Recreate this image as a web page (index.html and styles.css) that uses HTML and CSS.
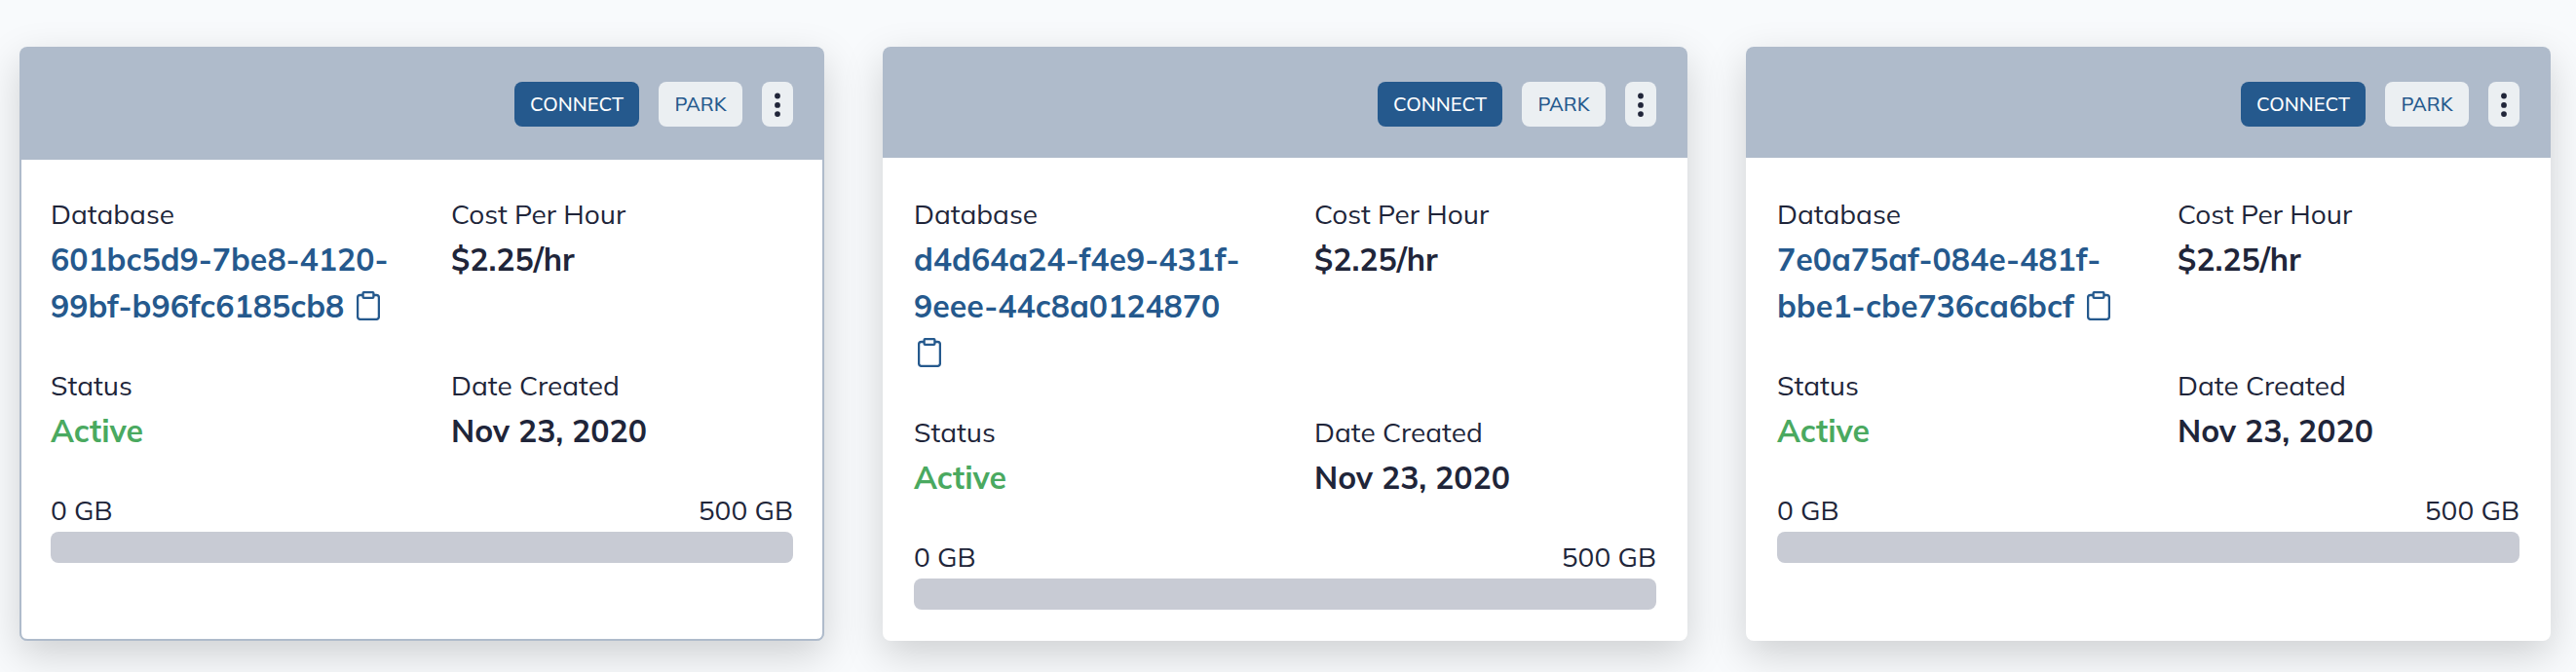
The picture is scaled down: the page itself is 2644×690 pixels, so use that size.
FILE: index.html
```html
<!DOCTYPE html>
<html lang="en">
<head>
<meta charset="utf-8">
<title>Databases</title>
<link rel="stylesheet" href="styles.css">
</head>
<body>
<svg width="0" height="0" class="sprite">
  <symbol id="clipboard" viewBox="0 0 24 30">
    <rect x="1.1" y="4" width="21.8" height="24.9" rx="2.6"/>
    <rect x="6.6" y="1.1" width="10.8" height="5.8" rx="1" class="clip"/>
  </symbol>
  <symbol id="dots" viewBox="0 0 6 26">
    <circle cx="3" cy="4.5" r="2.9"/><circle cx="3" cy="13.9" r="2.9"/><circle cx="3" cy="23.1" r="2.9"/>
  </symbol>
</svg>
<main class="cards">
  <article class="card selected">
    <header class="card-head">
      <button class="btn primary">CONNECT</button>
      <button class="btn park">PARK</button>
      <button class="btn menu"><svg class="dots"><use href="#dots"/></svg></button>
    </header>
    <div class="card-body">
      <dl class="facts">
        <div><dt>Database</dt><dd class="link">601bc5d9-7be8-4120-<br>99bf-b96fc6185cb8 <svg class="copy"><use href="#clipboard"/></svg></dd></div>
        <div><dt>Cost Per Hour</dt><dd>$2.25/hr</dd></div>
        <div><dt>Status</dt><dd class="active">Active</dd></div>
        <div><dt>Date Created</dt><dd>Nov 23, 2020</dd></div>
      </dl>
      <div class="scale"><span>0 GB</span><span>500 GB</span></div>
      <div class="bar"></div>
    </div>
  </article>
  <article class="card">
    <header class="card-head">
      <button class="btn primary">CONNECT</button>
      <button class="btn park">PARK</button>
      <button class="btn menu"><svg class="dots"><use href="#dots"/></svg></button>
    </header>
    <div class="card-body">
      <dl class="facts">
        <div><dt>Database</dt><dd class="link">d4d64a24-f4e9-431f-<br>9eee-44c8a0124870<br><svg class="copy"><use href="#clipboard"/></svg></dd></div>
        <div><dt>Cost Per Hour</dt><dd>$2.25/hr</dd></div>
        <div><dt>Status</dt><dd class="active">Active</dd></div>
        <div><dt>Date Created</dt><dd>Nov 23, 2020</dd></div>
      </dl>
      <div class="scale"><span>0 GB</span><span>500 GB</span></div>
      <div class="bar"></div>
    </div>
  </article>
  <article class="card">
    <header class="card-head">
      <button class="btn primary">CONNECT</button>
      <button class="btn park">PARK</button>
      <button class="btn menu"><svg class="dots"><use href="#dots"/></svg></button>
    </header>
    <div class="card-body">
      <dl class="facts">
        <div><dt>Database</dt><dd class="link">7e0a75af-084e-481f-<br>bbe1-cbe736ca6bcf <svg class="copy"><use href="#clipboard"/></svg></dd></div>
        <div><dt>Cost Per Hour</dt><dd>$2.25/hr</dd></div>
        <div><dt>Status</dt><dd class="active">Active</dd></div>
        <div><dt>Date Created</dt><dd>Nov 23, 2020</dd></div>
      </dl>
      <div class="scale"><span>0 GB</span><span>500 GB</span></div>
      <div class="bar"></div>
    </div>
  </article>
</main>
</body>
</html>
```
FILE: styles.css
```css
* { box-sizing: border-box; }
body {
  margin: 0;
  height: 690px;
  overflow: hidden;
  background: #f8fafc;
  color: #202539;
  font-family: Mulish, Muli, Lato, sans-serif;
}
.sprite { position: absolute; }
.cards {
  display: grid;
  grid-template-columns: repeat(3, 826px);
  gap: 60px;
  padding: 48px 20px 32px;
}
.card {
  height: 610px;
  border-radius: 8px;
  background: #fff;
  box-shadow: 0 14px 40px rgba(0, 0, 0, .17);
}
.card-head {
  display: flex;
  justify-content: flex-end;
  align-items: flex-start;
  gap: 20px;
  height: 114px;
  padding: 36px 32px 0;
  border-radius: 8px 8px 0 0;
  background: #afbbcb;
}
.card-body { padding: 36px 32px 32px; }
.selected .card-head { height: 116px; }
.selected .card-body {
  height: 494px;
  padding-top: 34px;
  border-radius: 0 0 8px 8px;
  box-shadow: inset 2px 0 #afbbcb, inset -2px 0 #afbbcb, inset 0 -2px #afbbcb;
}
.btn {
  display: flex;
  align-items: center;
  justify-content: center;
  height: 46px;
  padding: 0;
  border: 0;
  border-radius: 8px;
  background: #ebeff2;
  color: #25598d;
  font: 500 20px/46px Mulish, Muli, Lato, sans-serif;
}
.primary { width: 128px; background: #25598d; color: #fff; }
.park { width: 86px; }
.menu { width: 32px; }
.dots { width: 6px; height: 26px; fill: #202539; }
.facts {
  display: grid;
  grid-template-columns: 351px 351px;
  column-gap: 60px;
  row-gap: 36px;
  margin: 0;
}
dt, .scale { font-size: 28px; line-height: 44px; white-space: nowrap; }
dd {
  margin: 0;
  font-size: 32px;
  font-weight: 700;
  line-height: 48px;
  white-space: nowrap;
}
.link { color: #25598d; }
.active { color: #4aa960; }
.copy {
  width: 24px;
  height: 30px;
  margin-left: 4px;
  vertical-align: -3px;
  fill: none;
  stroke: #25598d;
  stroke-width: 2.3;
}
.clip { fill: #fff; }
.scale { display: flex; justify-content: space-between; margin-top: 36px; }
.bar { height: 32px; border-radius: 8px; background: #c8cbd4; }
```
